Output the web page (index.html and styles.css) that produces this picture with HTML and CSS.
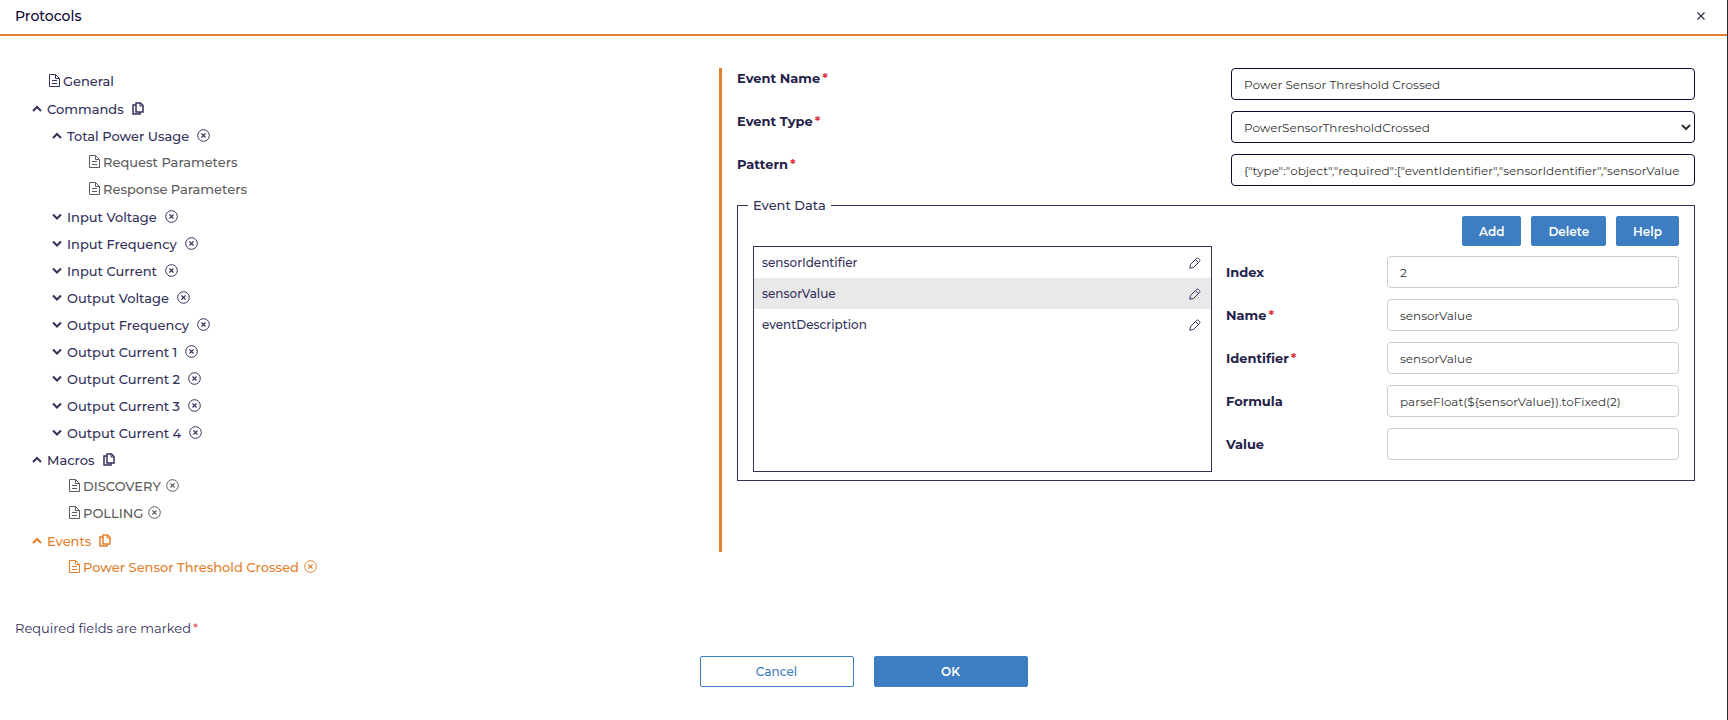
FILE: index.html
```
<!DOCTYPE html>
<html lang="en">
<head>
    <meta charset="UTF-8">
    <meta name="viewport" content="width=device-width, initial-scale=1.0">
    <title>Protocols</title>
    <link rel="stylesheet" href="styles.css">
</head>
<body>
    <!-- Icons -->
    <svg class="sprite" aria-hidden="true">
        <symbol id="i-file" viewBox="0 0 11 13">
            <path d="M.5.5h6l4 4v8h-10zM6.500.5v4h4M3 6.500h5M3 9.500h5" fill="none" stroke="currentColor"/>
        </symbol>
        <symbol id="i-up" viewBox="0 0 10 7">
            <path d="M1 6l4-4 4 4" fill="none" stroke="currentColor" stroke-width="2"/>
        </symbol>
        <symbol id="i-down" viewBox="0 0 10 7">
            <path d="M1 1.500l4 4 4-4" fill="none" stroke="currentColor" stroke-width="2"/>
        </symbol>
        <symbol id="i-copy" viewBox="0 0 12 13">
            <path d="M4 1h4.500l2.500 2.500v6.500h-7zM3.500 3h-2.500v9h7v-1.500" fill="none" stroke="currentColor" stroke-width="1.500"/>
            <path d="M8 1v3h3" fill="none" stroke="currentColor"/>
        </symbol>
        <symbol id="i-remove" viewBox="0 0 13 13">
            <circle cx="6.500" cy="6.500" r="5.800" fill="none" stroke="currentColor"/>
            <path d="M4.500 4.500l4 4M8.500 4.500l-4 4" fill="none" stroke="currentColor" stroke-width="1.100"/>
        </symbol>
        <symbol id="i-edit" viewBox="0 0 12 12">
            <path d="M.8 11.200l.7-3.700L7.500 1.500q1-1 2 0l1 1q1 1 0 2L4.500 10.500zM6.500 2.500l3 3" fill="none" stroke="currentColor"/>
        </symbol>
        <symbol id="i-close" viewBox="0 0 8 8">
            <path d="M.5.5l7 7M7.500.5l-7 7" fill="none" stroke="currentColor" stroke-width="1.200"/>
        </symbol>
    </svg>

    <div class="dialog">
        <header class="dialog-header">
            <h1>Protocols</h1>
            <button type="button" class="icon-btn" aria-label="Close"><svg class="icon-close"><use href="#i-close"/></svg></button>
        </header>

        <form>
            <div class="content">
                <!-- Tree -->
                <nav class="tree">
                    <ul>
                        <li><div class="node leaf"><svg class="icon-file"><use href="#i-file"/></svg><a href="#general">General</a></div></li>
                        <li>
                            <div class="node">
                                <button type="button" class="icon-btn" aria-label="Collapse"><svg class="icon-arrow"><use href="#i-up"/></svg></button>
                                <a href="#commands">Commands</a>
                                <button type="button" class="icon-btn" aria-label="Add command"><svg class="icon-copy"><use href="#i-copy"/></svg></button>
                            </div>
                            <ul>
                                <li>
                                    <div class="node">
                                        <button type="button" class="icon-btn" aria-label="Collapse"><svg class="icon-arrow"><use href="#i-up"/></svg></button>
                                        <a href="#total-power">Total Power Usage</a>
                                        <button type="button" class="icon-btn" aria-label="Remove"><svg class="icon-remove"><use href="#i-remove"/></svg></button>
                                    </div>
                                    <ul>
                                        <li><div class="node leaf muted"><svg class="icon-file"><use href="#i-file"/></svg><a href="#request">Request Parameters</a></div></li>
                                        <li><div class="node leaf muted"><svg class="icon-file"><use href="#i-file"/></svg><a href="#response">Response Parameters</a></div></li>
                                    </ul>
                                </li>
                                <li><div class="node">
                                    <button type="button" class="icon-btn" aria-label="Expand"><svg class="icon-arrow"><use href="#i-down"/></svg></button>
                                    <a href="#input-voltage">Input Voltage</a>
                                    <button type="button" class="icon-btn" aria-label="Remove"><svg class="icon-remove"><use href="#i-remove"/></svg></button>
                                </div></li>
                                <li><div class="node">
                                    <button type="button" class="icon-btn" aria-label="Expand"><svg class="icon-arrow"><use href="#i-down"/></svg></button>
                                    <a href="#input-frequency">Input Frequency</a>
                                    <button type="button" class="icon-btn" aria-label="Remove"><svg class="icon-remove"><use href="#i-remove"/></svg></button>
                                </div></li>
                                <li><div class="node">
                                    <button type="button" class="icon-btn" aria-label="Expand"><svg class="icon-arrow"><use href="#i-down"/></svg></button>
                                    <a href="#input-current">Input Current</a>
                                    <button type="button" class="icon-btn" aria-label="Remove"><svg class="icon-remove"><use href="#i-remove"/></svg></button>
                                </div></li>
                                <li><div class="node">
                                    <button type="button" class="icon-btn" aria-label="Expand"><svg class="icon-arrow"><use href="#i-down"/></svg></button>
                                    <a href="#output-voltage">Output Voltage</a>
                                    <button type="button" class="icon-btn" aria-label="Remove"><svg class="icon-remove"><use href="#i-remove"/></svg></button>
                                </div></li>
                                <li><div class="node">
                                    <button type="button" class="icon-btn" aria-label="Expand"><svg class="icon-arrow"><use href="#i-down"/></svg></button>
                                    <a href="#output-frequency">Output Frequency</a>
                                    <button type="button" class="icon-btn" aria-label="Remove"><svg class="icon-remove"><use href="#i-remove"/></svg></button>
                                </div></li>
                                <li><div class="node">
                                    <button type="button" class="icon-btn" aria-label="Expand"><svg class="icon-arrow"><use href="#i-down"/></svg></button>
                                    <a href="#output-current-1">Output Current 1</a>
                                    <button type="button" class="icon-btn" aria-label="Remove"><svg class="icon-remove"><use href="#i-remove"/></svg></button>
                                </div></li>
                                <li><div class="node">
                                    <button type="button" class="icon-btn" aria-label="Expand"><svg class="icon-arrow"><use href="#i-down"/></svg></button>
                                    <a href="#output-current-2">Output Current 2</a>
                                    <button type="button" class="icon-btn" aria-label="Remove"><svg class="icon-remove"><use href="#i-remove"/></svg></button>
                                </div></li>
                                <li><div class="node">
                                    <button type="button" class="icon-btn" aria-label="Expand"><svg class="icon-arrow"><use href="#i-down"/></svg></button>
                                    <a href="#output-current-3">Output Current 3</a>
                                    <button type="button" class="icon-btn" aria-label="Remove"><svg class="icon-remove"><use href="#i-remove"/></svg></button>
                                </div></li>
                                <li><div class="node">
                                    <button type="button" class="icon-btn" aria-label="Expand"><svg class="icon-arrow"><use href="#i-down"/></svg></button>
                                    <a href="#output-current-4">Output Current 4</a>
                                    <button type="button" class="icon-btn" aria-label="Remove"><svg class="icon-remove"><use href="#i-remove"/></svg></button>
                                </div></li>
                            </ul>
                        </li>
                        <li>
                            <div class="node">
                                <button type="button" class="icon-btn" aria-label="Collapse"><svg class="icon-arrow"><use href="#i-up"/></svg></button>
                                <a href="#macros">Macros</a>
                                <button type="button" class="icon-btn" aria-label="Add macro"><svg class="icon-copy"><use href="#i-copy"/></svg></button>
                            </div>
                            <ul>
                                <li><div class="node leaf muted">
                                    <svg class="icon-file"><use href="#i-file"/></svg><a href="#discovery">DISCOVERY</a>
                                    <button type="button" class="icon-btn" aria-label="Remove"><svg class="icon-remove"><use href="#i-remove"/></svg></button>
                                </div></li>
                                <li><div class="node leaf muted">
                                    <svg class="icon-file"><use href="#i-file"/></svg><a href="#polling">POLLING</a>
                                    <button type="button" class="icon-btn" aria-label="Remove"><svg class="icon-remove"><use href="#i-remove"/></svg></button>
                                </div></li>
                            </ul>
                        </li>
                        <li>
                            <div class="node active">
                                <button type="button" class="icon-btn" aria-label="Collapse"><svg class="icon-arrow"><use href="#i-up"/></svg></button>
                                <a href="#events">Events</a>
                                <button type="button" class="icon-btn" aria-label="Add event"><svg class="icon-copy"><use href="#i-copy"/></svg></button>
                            </div>
                            <ul>
                                <li><div class="node leaf active">
                                    <svg class="icon-file"><use href="#i-file"/></svg><a href="#power-sensor">Power Sensor Threshold Crossed</a>
                                    <button type="button" class="icon-btn" aria-label="Remove"><svg class="icon-remove"><use href="#i-remove"/></svg></button>
                                </div></li>
                            </ul>
                        </li>
                    </ul>
                </nav>

                <!-- Event details -->
                <section class="details">
                    <div class="form-row">
                        <label for="event-name">Event Name<span class="required">*</span></label>
                        <input type="text" id="event-name" value="Power Sensor Threshold Crossed">
                    </div>
                    <div class="form-row">
                        <label for="event-type">Event Type<span class="required">*</span></label>
                        <select id="event-type">
                            <option>PowerSensorThresholdCrossed</option>
                        </select>
                    </div>
                    <div class="form-row">
                        <label for="pattern">Pattern<span class="required">*</span></label>
                        <input type="text" id="pattern" value='{"type":"object","required":["eventIdentifier","sensorIdentifier","sensorValue'>
                    </div>

                    <fieldset>
                        <legend>Event Data</legend>
                        <div class="toolbar">
                            <button type="button" class="btn btn-primary">Add</button>
                            <button type="button" class="btn btn-primary">Delete</button>
                            <button type="button" class="btn btn-primary">Help</button>
                        </div>
                        <div class="event-data">
                            <ul class="list">
                                <li>sensorIdentifier <button type="button" class="icon-btn" aria-label="Edit"><svg class="icon-edit"><use href="#i-edit"/></svg></button></li>
                                <li class="selected">sensorValue <button type="button" class="icon-btn" aria-label="Edit"><svg class="icon-edit"><use href="#i-edit"/></svg></button></li>
                                <li>eventDescription <button type="button" class="icon-btn" aria-label="Edit"><svg class="icon-edit"><use href="#i-edit"/></svg></button></li>
                            </ul>
                            <div class="fields">
                                <div class="field">
                                    <label for="index">Index</label>
                                    <input type="text" id="index" value="2">
                                </div>
                                <div class="field">
                                    <label for="name">Name<span class="required">*</span></label>
                                    <input type="text" id="name" value="sensorValue">
                                </div>
                                <div class="field">
                                    <label for="identifier">Identifier<span class="required">*</span></label>
                                    <input type="text" id="identifier" value="sensorValue">
                                </div>
                                <div class="field">
                                    <label for="formula">Formula</label>
                                    <input type="text" id="formula" value="parseFloat(${sensorValue}).toFixed(2)">
                                </div>
                                <div class="field">
                                    <label for="value">Value</label>
                                    <input type="text" id="value">
                                </div>
                            </div>
                        </div>
                    </fieldset>
                </section>
            </div>

            <p class="note">Required fields are marked<span class="required">*</span></p>

            <div class="actions">
                <button type="button" class="btn btn-secondary">Cancel</button>
                <button type="submit" class="btn btn-primary">OK</button>
            </div>
        </form>
    </div>
</body>
</html>
```
FILE: styles.css
```
* { box-sizing: border-box; }

body { margin: 0; font-family: Montserrat, Inter, sans-serif; font-size: 13px; color: #33315a; background: #fff; }

ul { list-style: none; margin: 0; padding: 0; }

a { color: inherit; text-decoration: none; }

svg { display: block; flex: none; }

.sprite { display: none; }

.dialog { min-height: 100vh; border-right: 1px solid #2c2c34; }

.dialog-header { display: flex; align-items: center; justify-content: space-between; height: 36px; padding: 0 22px 2px 15px; border-bottom: 2px solid #e37f2c; }

.dialog-header h1 { margin: 0; font-size: 14px; font-weight: 500; color: #0d0836; }

.icon-btn { display: flex; padding: 0; border: none; background: none; color: inherit; cursor: pointer; }

.icon-close { width: 8px; height: 8px; }

.icon-file { width: 11px; height: 13px; }

.icon-arrow { width: 10px; height: 7px; }

.icon-copy { width: 12px; height: 13px; }

.icon-remove { width: 13px; height: 13px; }

.icon-edit { width: 12px; height: 12px; }

.content { display: grid; grid-template-columns: 703fr 976fr; align-items: start; padding: 32px 32px 0 16px; }

/* Tree */
.tree { padding-left: 16px; font-weight: 500; }

.tree ul ul { padding-left: 20px; }

.node { display: flex; align-items: center; height: 27px; }

.node a { margin: 0 8px 0 5px; }

.leaf { padding: 0 0 2px 17px; }

.leaf a { margin: 0 5px 0 3px; }

.muted { color: #5c5c5e; }

.active { color: #e37f2c; }

/* Event details */
.details { min-height: 484px; padding-left: 15px; border-left: 3px solid #e37f2c; }

label { font-size: 13px; font-weight: 700; color: #25224a; }

.required { margin-left: 2px; color: #dc3545; }

input, select { width: 100%; height: 32px; padding: 0 12px; border: 1px solid #ccc; border-radius: 4px; background: #fff; font-family: inherit; font-size: 12px; font-weight: 400; color: #333; }

select { padding: 0 8px; }

.form-row { display: grid; grid-template-columns: 494fr 464fr; margin-bottom: 11px; }

.form-row label { padding-top: 2px; }

.form-row input, .form-row select { border-color: #0d0836; }

fieldset { min-width: 0; margin: 0; padding: 3px 15px 8px; border: 1px solid #33315a; }

legend { margin-left: -5px; padding: 0 5px; font-weight: 500; }

.toolbar { display: flex; justify-content: flex-end; gap: 10px; }

.btn { height: 30px; padding: 0 16px; border: 1px solid #3d7dc1; border-radius: 2px; font-family: inherit; font-size: 12px; font-weight: 600; cursor: pointer; }

.btn-primary { background: #3d7dc1; color: #fff; }

.btn-secondary { background: #fff; color: #3d7dc1; font-weight: 500; }

.event-data { display: grid; grid-template-columns: 459fr 453fr; gap: 14px; }

.list { height: 226px; border: 1px solid #33315a; font-size: 12px; font-weight: 500; }

.list li { display: flex; align-items: center; justify-content: space-between; height: 31px; padding: 0 10px 0 8px; }

.list .selected { background: #e9e9e9; }

.fields { padding-top: 10px; }

.field { display: grid; grid-template-columns: 161fr 292fr; align-items: center; margin-bottom: 11px; }

.note { margin: 39px 15px 20px; }

.actions { display: flex; justify-content: center; gap: 20px; }

.actions .btn { width: 154px; height: 31px; }
```
